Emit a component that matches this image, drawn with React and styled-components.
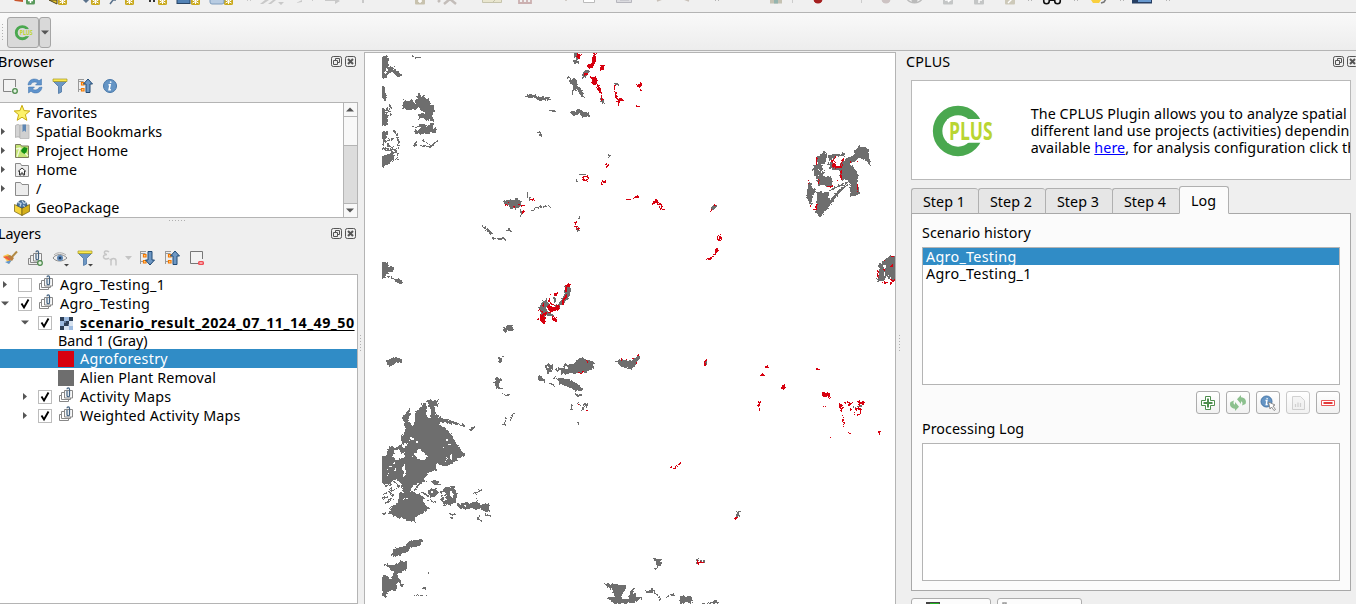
import React from "react";
import styled, { createGlobalStyle } from "styled-components";

const Global = createGlobalStyle`
  * { box-sizing: border-box; }
  html, body { margin: 0; height: 604px; overflow: hidden; background: #efefef; }
  body { font: 14.3px/19px "Noto Sans", "Open Sans", sans-serif; color: #000; letter-spacing: -0.1px; }
  svg { display: block; flex: none; }
`;

const Window = styled.div`
  width: 1356px;
  height: 604px;
  overflow: hidden;
  display: flex;
  flex-direction: column;
`;
const TopToolbar = styled.div`
  height: 13px;
  flex: none;
  overflow: hidden;
  background: #f0f0f0;
  border-bottom: 1px solid #b4b4b4;
`;
const PluginToolbar = styled.div`
  height: 38px;
  flex: none;
  display: flex;
  align-items: flex-start;
  padding: 4px 0 0 2px;
  gap: 4px;
  background: linear-gradient(#f9f9f9, #ededed);
  border-bottom: 1px solid #b4b4b4;
`;
const Grip = styled.div`
  width: 1px;
  padding-top: 7px;
`;
const SplitButton = styled.div`
  display: flex;
  height: 31px;
`;
const SplitPart = styled.div`
  width: ${(p) => p.$w}px;
  border: 1px solid #a5a5a5;
  border-radius: 3px;
  background: #d9d9d9;
  display: flex;
  align-items: center;
  justify-content: center;
`;
const Main = styled.div`
  flex: 1;
  min-height: 0;
  display: flex;
`;
const LeftDock = styled.div`
  width: 358px;
  flex: none;
  display: flex;
  flex-direction: column;
`;
const DockTitle = styled.div`
  height: 22px;
  flex: none;
  display: flex;
  align-items: center;
  padding-left: ${(p) => p.$left || 0}px;
`;
const DockName = styled.span`
  flex: 1;
  margin-left: ${(p) => p.$shift || 0}px;
  padding-bottom: 2px;
  letter-spacing: ${(p) => p.$ls || "-0.1px"};
`;
const DockButtons = styled.div`
  display: flex;
  gap: 2px;
  margin-right: ${(p) => p.$right || 0}px;
`;
const IconBar = styled.div`
  height: 29px;
  flex: none;
  display: flex;
  align-items: center;
  gap: 9px;
  padding: 0 0 4px 2px;
`;
const Tree = styled.div`
  height: ${(p) => p.$h};
  flex: ${(p) => (p.$grow ? 1 : "none")};
  min-height: 0;
  display: flex;
  overflow: hidden;
  background: #fff;
  border: 1px solid #b4b4b4;
  border-left: 0;
`;
const TreeRows = styled.div`
  flex: 1;
`;
const TreeRow = styled.div`
  height: ${(p) => p.$h || 19}px;
  display: flex;
  align-items: center;
  padding-left: ${(p) => p.$indent || 0}px;
  white-space: nowrap;
  background: ${(p) => (p.$selected ? "#308cc6" : "transparent")};
  color: ${(p) => (p.$selected ? "#fff" : "#000")};
`;
const ArrowCell = styled.span`
  width: ${(p) => p.$w}px;
  padding-left: ${(p) => p.$x || 0}px;
  flex: none;
`;
const Label = styled.span`
  margin-left: ${(p) => (p.$gap === undefined ? 6 : p.$gap)}px;
  letter-spacing: ${(p) => p.$ls || "0.22px"};
  font-weight: ${(p) => (p.$active ? 700 : 400)};
  ${(p) => p.$active && "text-decoration: underline; text-underline-offset: 2px;"}
`;
const CheckBox = styled.span`
  width: 14px;
  height: 14px;
  flex: none;
  border: 1px solid #bcbcbc;
  background: #fff;
`;
const LayerIcon = styled.span`
  margin-left: 6px;
  padding-bottom: ${(p) => (p.$group ? 3 : 0)}px;
`;
const Swatch = styled.span`
  width: 16px;
  height: 16px;
  flex: none;
  background: ${(p) => p.$color};
`;
const ScrollBar = styled.div`
  width: 14px;
  flex: none;
  display: flex;
  flex-direction: column;
  border-left: 1px solid #b4b4b4;
  background: #dcdcdc;
`;
const ScrollPart = styled.div`
  height: ${(p) => p.$h}px;
  display: flex;
  align-items: center;
  justify-content: center;
  background: #f8f8f8;
  border-bottom: ${(p) => (p.$end ? 0 : 1)}px solid #b4b4b4;
  border-top: ${(p) => (p.$end ? 1 : 0)}px solid #b4b4b4;
  margin-top: ${(p) => (p.$end ? "auto" : 0)};
`;
const HandleRow = styled.div`
  height: 5px;
  flex: none;
  padding: 2px 0 0 169px;
`;
const Splitter = styled.div`
  width: ${(p) => p.$w}px;
  flex: none;
  display: flex;
  align-items: flex-start;
  justify-content: center;
  padding-top: ${(p) => p.$top}px;
`;
const MapFrame = styled.div`
  width: 532px;
  flex: none;
  margin-top: 1px;
  background: #fff;
  border: 1px solid #b4b4b4;
  border-bottom: 0;
  overflow: hidden;
`;
const RightDock = styled.div`
  width: 452px;
  flex: none;
  display: flex;
  flex-direction: column;
`;
const Intro = styled.div`
  width: 440px;
  height: 100px;
  flex: none;
  margin: 7px 0 0 7px;
  display: flex;
  align-items: center;
  background: #fff;
  border: 1px solid #b9b9b9;
  overflow: hidden;
  padding-left: 18px;
`;
const IntroText = styled.div`
  margin-left: 38px;
  padding-top: 1px;
  white-space: nowrap;
  line-height: 17px;
`;
const IntroLine = styled.div`
  letter-spacing: ${(p) => p.$ls};
`;
const HelpLink = styled.span`
  color: #0000ff;
  text-decoration: underline;
`;
const TabBar = styled.div`
  height: 28px;
  flex: none;
  margin: 6px 0 -1px 7px;
  display: flex;
  align-items: flex-end;
`;
const Tab = styled.div`
  width: ${(p) => (p.$active ? 50 : 67)}px;
  height: ${(p) => (p.$active ? 28 : 26)}px;
  padding: ${(p) => (p.$active ? "4px 1px 0 0" : "3px 2px 0 0")};
  text-align: center;
  border: 1px solid #b0b0b0;
  border-right-width: ${(p) => (p.$active ? 1 : 0)}px;
  border-bottom-color: ${(p) => (p.$active ? "#fbfbfb" : "#a8a8a8")};
  border-radius: 3px 3px 0 0;
  background: ${(p) => (p.$active ? "#fbfbfb" : "#e6e6e6")};
  position: relative;
  letter-spacing: 0.05px;
`;
const TabPane = styled.div`
  width: 440px;
  height: 378px;
  flex: none;
  margin-left: 7px;
  padding: 9px 10px 10px;
  background: #fbfbfb;
  border: 1px solid #a8a8a8;
  display: flex;
  flex-direction: column;
`;
const PaneLabel = styled.div`
  height: 19px;
  letter-spacing: 0.05px;
`;
const ListBox = styled.div`
  height: 138px;
  margin-top: 5px;
  flex: none;
  background: #fff;
  border: 1px solid #b4b4b4;
`;
const ListItem = styled.div`
  height: 17px;
  line-height: 18px;
  padding-left: 3px;
  letter-spacing: 0.3px;
  background: ${(p) => (p.$selected ? "#308cc6" : "transparent")};
  color: ${(p) => (p.$selected ? "#fff" : "#000")};
`;
const ActionRow = styled.div`
  display: flex;
  justify-content: flex-end;
  gap: 6px;
  padding: 6px 0;
  height: 34px;
`;
const ActionButton = styled.div`
  width: 24px;
  height: 23px;
  display: flex;
  align-items: center;
  justify-content: center;
  border: 1px solid ${(p) => (p.$disabled ? "#c9c9c9" : "#adadad")};
  border-radius: 3px;
  background: linear-gradient(#fff, #f1f1f1);
  svg { opacity: ${(p) => (p.$disabled ? 0.5 : 1)}; }
`;
const FooterRow = styled.div`
  display: flex;
  gap: 6px;
  margin: 7px 0 0 7px;
`;
const FooterButton = styled.div`
  width: ${(p) => p.$w}px;
  height: 26px;
  flex: none;
  padding: 3px 0 0 ${(p) => p.$pad}px;
  border: 1px solid #adadad;
  border-radius: 3px;
  background: #fcfcfc;
`;

const DockIcon = ({ kind }) => (
  <svg width="12" height="12" viewBox="0 0 12 12" fill="none" stroke="#555">
    <rect x=".5" y=".5" width="10" height="10" rx="1.8" strokeWidth="1" />
    {kind === "close" ? (
      <path d="M3 3l5 5M8 3l-5 5" strokeWidth="2" />
    ) : (
      <path d="M4.500 4.500v-2h4v4h-2M2.500 4.500h4v4h-4z" strokeWidth="1" />
    )}
  </svg>
);
const Arrow = ({ dir }) => (
  <svg width="9" height="9" viewBox="0 0 9 9" fill="#555">
    <path d={{ right: "M1 1v7l4-3.500z", down: "M0 2.500h8l-4 4z", up: "M0 6.500h8l-4-4z" }[dir]} />
  </svg>
);
const Dots = ({ vertical, n = 6 }) => (
  <svg width={vertical ? 2 : 18} height={vertical ? 18 : 2} fill="#b0b0b0">
    {Array.from({ length: n }, (_, i) => (
      <rect key={i} x={vertical ? 0 : i * 3} y={vertical ? i * 3 : 0} width="1" height="1" />
    ))}
  </svg>
);
const Check = () => (
  <svg width="12" height="12" viewBox="0 0 12 12" fill="none" stroke="#000" strokeWidth="1.900">
    <path d="M2.500 5.500l2.500 4 4.500-8" />
  </svg>
);

const funnel = (
  <g>
    <path d="M1.500 3.500l5 5v7l3-1.500v-5.500l5-5z" fill="#6d97c4" stroke="#4a74a3" strokeWidth=".8" />
    <path d="M1 1h14v2.500H1z" fill="#fce94f" stroke="#a59a23" strokeWidth=".7" />
  </g>
);
const tree = (
  <g fill="none">
    <path d="M1.500 1v13M1.500 3.500h5M1.500 11.500h4M1 1.500h6" stroke="#999" />
    <path d="M4.500 4.500h2.500v2.500H4.500zM4.500 10.500h2.500v2.500H4.500z" stroke="#f57900" fill="#ffd090" strokeWidth="1.200" />
  </g>
);
const upArrow = <path d="M11 1l4.500 5H13v8.500H9V6H6.500z" fill="#6d97c4" stroke="#204a75" />;
const groupShape = (
  <g fill="none">
    <path d="M4 8.500H1.500v6h9V13" stroke="#888" />
    <path d="M6 5.500H3.500v7h9V11" stroke="#888" />
    <path d="M6.500 3.500h8v7.500H6.500z" stroke="#888" fill="#f7f7f7" />
    <path d="M9 4v4.500a1 1 0 002.500 0V2.200a1.200 1.200 0 00-2.500 0" stroke="#41607f" strokeWidth="1.200" />
  </g>
);
const infoShape = (
  <g>
    <circle cx="8" cy="8" r="6.500" fill="#6595c5" stroke="#4676a8" />
    <path d="M8.800 3.500l-.3 1.400M6.500 6.800h1.600l-1 5h1.800" stroke="#fff" strokeWidth="1.600" fill="none" />
  </g>
);

const shapes = {
  add: (
    <g fill="none">
      <path d="M13.500 9V1.500h-12v12h8" stroke="#858585" fill="#f2f2f2" />
      <circle cx="13" cy="13" r="2.300" stroke="#4b8a4b" strokeWidth="1.300" fill="#e5f2e2" />
    </g>
  ),
  refresh: (
    <g fill="#5f93cc" stroke="#3a6fa8" strokeWidth=".5">
      <path d="M1 7c.5-4 3-6 6.500-6 2 0 3.500.8 4.500 1.800L14.500 1v6H8.500l2-2C9 3.500 5 3.600 4 6.500z" />
      <path d="M15 9c-.5 4-3 6-6.500 6-2 0-3.500-.8-4.500-1.800L1.500 15V9h6l-2 2c1.500 1.500 5.500 1.400 6.500-1.500z" />
    </g>
  ),
  filter: funnel,
  filterMenu: (
    <g>
      {funnel}
      <path d="M11 14h5l-2.500 2.500z" fill="#444" />
    </g>
  ),
  collapse: (
    <g>
      {tree}
      {upArrow}
    </g>
  ),
  expand: (
    <g>
      {tree}
      <path d="M11 15l4.500-5H13V1.500H9V10H6.500z" fill="#6d97c4" stroke="#204a75" />
    </g>
  ),
  info: infoShape,
  star: <path d="M8 .3l2.100 5.300 5.700.4-4.400 3.700 1.400 5.600L8 12.200 3.200 15.300l1.400-5.600L.2 6l5.700-.4z" fill="#fcf26a" stroke="#c9ab0c" />,
  bookmark: (
    <g>
      <path d="M1.500 1.500c2-1.500 3.500-1 4.500 0v12c-1-.8-3-.8-4.500 0z" fill="#d4d4d4" stroke="#aaa" strokeWidth=".8" />
      <path d="M6 1h9v13.500H6z" fill="#d0d0d0" stroke="#b5b5b5" strokeWidth=".8" />
      <path d="M8.500 .5h3.500v7.500l-1.700-1.500L8.500 8z" fill="#5e87b4" />
    </g>
  ),
  projectHome: (
    <g>
      <path d="M1.500 1.500h5l1 1.500h7v11.500h-13z" fill="#c4e476" stroke="#7a7a5a" />
      <path d="M2 6l4-1 8 8M6 5l-3 9" stroke="#f2f9dc" strokeWidth="1.300" fill="none" />
      <path d="M7 7l3-3 3.500 1-1 4-2 2-3-2z" fill="#139014" />
    </g>
  ),
  home: (
    <g fill="#ececec" stroke="#8a8a8a">
      <path d="M1.500 1.500h5l1 2h7v11h-13z" />
      <path d="M4 9.500l4-3.500 4 3.500M5.500 9v4h1.500v-2h2v2h1.500V9" stroke="#333" fill="#fff" />
    </g>
  ),
  folder: <path d="M1.500 1.500h5l1.500 2h6.500v11h-13z" fill="#ececec" stroke="#8a8a8a" />,
  geopackage: (
    <g>
      <path d="M.5 4.500l7.500 3.500v7.500l-7.500-4z" fill="#f5d53c" stroke="#6d5a10" strokeWidth=".7" />
      <path d="M15.500 4.500L8 8v7.500l7.500-4z" fill="#d5b01b" stroke="#6d5a10" strokeWidth=".7" />
      <path d="M3 5.500a5 5 0 1110 0L8 8z" fill="#4b74a0" stroke="#29465f" strokeWidth=".7" />
      <path d="M4 2.500l3 1-1 3M8 .5l2 3 2-1M9 5.500l2 1" stroke="#c3d7e8" strokeWidth="1.200" fill="none" />
    </g>
  ),
  style: (
    <g>
      <path d="M15 1.500L9 8" stroke="#b28a45" strokeWidth="2" />
      <path d="M1 6l5-2 5 4-4 6z" fill="#f6c84d" />
      <path d="M1 7l4-1 4 3-1 2z" fill="#ef5d3c" />
      <path d="M3 12l4 2 3-4z" fill="#6197cf" />
      <path d="M8 5l4 3-2 3-5-5z" fill="#b9803f" />
    </g>
  ),
  group: groupShape,
  addGroup: (
    <g>
      {groupShape}
      <circle cx="13" cy="13" r="2.300" stroke="#4b8a4b" strokeWidth="1.200" fill="#e5f2e2" />
    </g>
  ),
  eye: (
    <g fill="none">
      <path d="M1 8c3-4.500 10-4.500 14 0-4 4-11 4-14 0z" fill="#eee" stroke="#888" />
      <path d="M2 5c3-3 8-3 12 0" stroke="#aaa" />
      <circle cx="8" cy="8" r="3" fill="#5f88b6" />
      <circle cx="8" cy="8" r="1.300" fill="#223e60" />
      <path d="M12 14h5l-2.500 2.500z" fill="#444" />
    </g>
  ),
  expression: (
    <g fill="none" stroke="#c6c6c6" strokeWidth="1.500">
      <path d="M7 2C4.500 0 2 1.200 2.500 3c.3 1.300 1.500 1.500 2.500 1.500C3 4.500 1.200 5.500 1.500 7.200 2 9.500 5 9.500 7 8.200" />
      <path d="M9 15.500V11a2.500 2.500 0 015 0v4.500M7.500 9.500H10" />
    </g>
  ),
  remove: (
    <g>
      <path d="M13.500 9V1.500h-12v12h8" stroke="#777" fill="#f2f2f2" />
      <rect x="9" y="11" width="6" height="4" rx="1.500" fill="#ef4b53" />
      <path d="M10.500 13h3" stroke="#fff" />
    </g>
  ),
  raster: (
    <g shapeRendering="crispEdges">
      <path d="M2 2h13v13H2z" fill="#d6e2f0" />
      <path d="M2 2h4v4H2zM6 6h5v5H6zM11 2h4v4h-4zM2 11h4v4H2z" fill="#2c3e55" />
      <path d="M6 2h5v4H6zM2 6h4v5H2zM11 11h4v4h-4z" fill="#9dbbe0" />
      <path d="M6 6h2v2H6zM10 9h1v2h-1z" fill="#60799a" />
    </g>
  ),
  plus: (
    <g fill="none" stroke="#4d8d4d">
      <path d="M5.500 1.500h5v4h4v5h-4v4h-5v-4h-4v-5h4z" fill="#fff" />
      <path d="M8 3.500v9M3.500 8h9" strokeWidth="2" />
    </g>
  ),
  sync: (
    <g fill="#8cc08e">
      <path d="M7 4.300l4-4.300v2.300c4 .2 6 3.500 4.500 6.700l-3.500 1.500c1.200-2.500 0-4-1-4V9z" />
      <path d="M9 11.700l-4 4.300v-2.300C1 13.500-1 10.200.5 7L4 5.500C2.800 8 4 9.500 5 9.500V7z" />
    </g>
  ),
  infoPick: (
    <g>
      <circle cx="6.500" cy="6.500" r="5.500" fill="#6595c5" stroke="#4676a8" />
      <path d="M7.300 3l-.3 1.200M5.500 5.500H7l-.8 4h1.500" stroke="#fff" strokeWidth="1.300" fill="none" />
      <path d="M8.500 7l6.500 3-2 1 2.500 3.500-1.500 1L11.500 12 10 14z" fill="#fff" stroke="#777" strokeWidth=".8" />
    </g>
  ),
  report: (
    <g fill="none" stroke="#aaa">
      <path d="M2.500 1.500h8l4 4v9h-12z" fill="#eee" />
      <path d="M5.500 12V9M8 12V7.500M10.500 12V8" strokeWidth="1.200" />
    </g>
  ),
  minus: (
    <g>
      <path d="M1.500 5.500h13v5h-13z" fill="#fff" stroke="#e85757" />
      <path d="M3.500 8h9" stroke="#e23b3b" strokeWidth="2" />
    </g>
  ),
};
const Icon = ({ name, size = 16 }) => (
  <svg width={size} height={size} viewBox="0 0 16 16" overflow="visible">
    {shapes[name]}
  </svg>
);

const LogoType = styled.text`
  font: 700 26px "Open Sans", sans-serif;
  letter-spacing: 0;
`;
const CplusLogo = ({ size, backdrop }) => (
  <svg width={size * 1.1} height={size} viewBox="0 0 66 60" overflow="visible">
    <circle cx="29.500" cy="30.500" r="21.500" fill="none" stroke="#4aa84f" strokeWidth="10" />
    <path d="M18 18h38v25H18z" fill={backdrop} />
    <LogoType x="20" y="40" fill="#b9d532" textLength="46" lengthAdjust="spacingAndGlyphs">
      PLUS
    </LogoType>
  </svg>
);

/* Lower edges of the main toolbar's icons, cut off by the window top. */
const ToolbarStrip = () => (
  <svg width="1356" height="12" viewBox="0 0 1356 12">
    <path d="M14 0h9v2l-8-1z" fill="#c9552c" />
    <rect x="26" y="-5" width="9" height="9.500" rx="1.500" fill="#5a9a5d" />
    <path d="M30.500 0v3M28 .5h5" stroke="#fff" strokeWidth="1.500" />
    <path d="M49 0h8v4z" fill="#e5c229" stroke="#4c4320" />
    {[58, 91, 125, 158, 191, 224].map((x) => (
      <g key={x}>
        <rect x={x} y="-4" width="9" height="9" rx="1.500" fill="#c9a91d" />
        <path d="M4.500-1v5M1.500 0l6 3M7.500 0l-6 3" transform={`translate(${x} 0)`} stroke="#fff" />
      </g>
    ))}
    <path d="M84 0h4l-2 2zM110 4l3-4h3" fill="none" stroke="#59718b" strokeWidth="1.500" />
    <path d="M149 1h2M153 1h2" stroke="#333" strokeWidth="2" />
    <rect x="177" y="-5" width="13" height="8.500" fill="#5282b5" stroke="#294565" />
    <rect x="210" y="-5" width="14" height="9" rx="2" fill="#b8cce2" stroke="#7e9cbc" />
    <g fill="#c9c9c9">
      <path d="M260 4l5-4h4l-6 4zM268 4l5-4h3l-5 4zM278 2h6l-3 3zM296 3l6-3v2zM325 0h10v1h-10zM335-2l5 3-5 3zM362 0h2v3h-2z" />
      <path d="M247 0h1v1h-1zM250 0h1v1h-1zM312 0h1v1h-1z" />
    </g>
    <rect x="415" y="-5" width="10" height="9.500" rx="1" fill="#c8c2ae" />
    <path d="M418 1h4M420-1v4" stroke="#fff" strokeWidth="1.400" />
    <path d="M438 2l2-2M444 4l6-5 6 5" stroke="#c3bdb9" strokeWidth="2.500" fill="none" />
    <path d="M482.500 0v2.500h19V0M492 3l3-3" stroke="#c6c4ad" fill="#e9e6cf" />
    <path d="M519 0v3h12V0M523 0v2M527 0v2" stroke="#cbb0b0" strokeWidth="1.800" fill="none" />
    <path d="M583.500 0v2.500h11V0" stroke="#bbb" fill="#fff" />
    <path d="M616.500 0v2.500h15V0M620 0h9" stroke="#b6b6bd" fill="#dcdce0" />
    <path d="M657 1l5-2M684-1l5 2M565 0h2" stroke="#c8c0b8" strokeWidth="1.700" />
    <g fill="#b4b4b4">
      {[715, 1028, 1074, 1120, 1166].map((x) => (
        <path key={x} d={`M${x} 0h1v1h-1zM${x + 3} 0h1v1h-1z`} />
      ))}
    </g>
    <path d="M770 0h12v3.500h-12z" fill="#c5c2b3" />
    <path d="M774 0h4v3.500h-4z" fill="#95b4ae" />
    <path d="M792.500 0v3M861.500 0v3" stroke="#ccc" />
    <circle cx="818" cy="-1" r="4.500" fill="#a52020" />
    <circle cx="886" cy="-1" r="4.500" fill="#cdc3c3" />
    <path d="M907-1c3 5 12 5 15 0" stroke="#bbb" strokeWidth="1.400" fill="none" />
    <circle cx="914.500" cy="0" r="3" fill="#bbb" />
    <rect x="943" y="-5" width="10" height="9.500" rx="1" fill="#c4c6c6" />
    <rect x="974" y="-5" width="10" height="9.500" rx="1" fill="#c4c6c6" />
    <rect x="1005" y="-5" width="10" height="9.500" rx="1" fill="#cdc9b9" />
    <path d="M945 0h5l-2-2M950 0l-2 2M979 3V0h3M1008 3l4-4" stroke="#fff" strokeWidth="1.400" fill="none" />
    <circle cx="1046.500" cy="1" r="2.800" fill="#eee" stroke="#111" strokeWidth="1.600" />
    <circle cx="1057.500" cy="1" r="2.800" fill="#eee" stroke="#111" strokeWidth="1.600" />
    <path d="M1049 0h6" stroke="#111" strokeWidth="2" />
    <path d="M1091 0h10l-2 3h-6z" fill="#f9cf3e" />
    <path d="M1101 3l3-1 2-3" stroke="#777" strokeWidth="1.500" fill="none" />
    <path d="M1132 0h20v3.500h-20z" fill="#273f63" />
    <path d="M1138 0h13v2h-13z" fill="#6899cf" />
  </svg>
);

const grey = "#6e6e6e";
const red = "#d7000f";

/* Classified raster: grey is plant removal, red is agroforestry. Each tile is digitised at a third of a pixel. */
const tiles = [
  {
    at: [375, 50],
    greyFill:
      "M15 19h25v32h22v4h-8l28 20v6h-12l-18-14-10 2-8 18h-19zM15 108h13l6 46h-5l-7-10h-7zM15 172l15 4 2 14 6 6v28h-23zM15 240l19 4 6-4-2 10-10 16-13 4zM15 320l19-6 24-8-2 24-12 12-29 12z" +
      "M84 152l24-4 12 14 8-28 6-2 30 18v14l14 4v24l-18 0-16-8-12-12-14 8h-22l-12-4zM132 190h42v24l-10-8-10 8-8-12-14 4zM132 218l16 2 10 8 16-10v16h8v14h-18v4h-44v-10l14-6z" +
      "M112 288l12-16 4 14zM325 529l14 6 8 8 8 10h-12l-8-12zM15 636h23l4 16h14v8l-10 6-10 4-8 14h-13zM70 684l14 12-4 6-14-4-8-8z" +
      "M379 459l14-10h26l10-2 10 8-2 14-8 6-20 2-10-12z",
    greyLine:
      "M111 16l9 8h18M42 162l6 10-6 10 10 12M26 184l12-10v14M56 240l8 16 8 22-6 18-28 6-14-14 2-20 10-8M30 296l28 12 12-10M70 308l-6 28M30 256l-4 20 18-6 14-4M36 282l18 14M20 296l18 4M112 229h24M124 286l46 4 6-6M142 272l18 8 8 8 20-16M349 563l22 4h20M397 539l14 6M40 678l30 14M436 476l4 22",
    redLine: "M390 464h6M400 454v6M414 466l6 6M428 464h6M438 468h8M442 486h4",
    holes: "M30 58h10v3h-10zM28 66h8v3h-8z",
  },
  {
    at: [500, 50],
    greyFill:
      "M220 9h14v22l6 12h-18l2-16zM246 74l8-14 16 4-10 16-8 6zM208 92l16-8 8 18 20 30 2 12-8-4-16-22-8 4-4 14-4-4 6-20zM76 136l18-4 20 8 36 2 2 8-32 2-16-6-24-4zM213 182h16l6-10 6 8 20 8 16 14h-26l-14-10-16 8-8-10zM115 246l8-4v8l8 12-14-8zM306 140l6 18-6 4-6-20zM635 464h12v6l-6 10-6-2z" +
      "M196 704l18-2-4 30-12 22-12 10-18 14-6-4 18-18 10-16zM160 742l8 2-2 12-6-4zM126 756l14-8 6 16-8 12 10 14 16 6-14 4-10-4-14 14-8-4 6-16-8-14z" +
      "M12 830l26-6v18H12z",
    greyLine: "M198 78l14 8 4 10M150 182h16l-6 4M324 314l6 4-6 4M346 108v-6h10v6M238 374h18M230 388l4 10M84 424l-4 10 10 14M94 482l16-8 24-6h16M24 538l10 6M228 530l6 14 6-4M238 498v10M232 530l4 14M166 738l-6 10 4 10",
    redFill:
      "M280 9h8v22l-8 22h-16l-4-8 14-4zM300 46h12v14h-12zM272 80h16l4 16-8 12-8-10zM288 108l14 8 4 16-8-4zM350 142l14 6-8 20-6-8zM411 104l8-4 4-6 4 14-8 4 4 10-12-14zM234 11h14l-14 18-6-8zM318 342h8v8h-8z" +
      "M200 702h14v8h-12l-4 24 4 4-8 12v-30zM140 770l8-8 10 8h12l10 6-16 8-16 2zM120 796h12v14l-10 2zM154 800l16 4v8h-10zM144 742l6 4v14l-6-4z",
    redLine:
      "M252 72h12M280 80l16 28 12 48M342 108l4 28 12 18-4 14M360 146l8 4M408 169h12M248 382l14-4v12h-12M306 404v-12l12 6M378 446l10 4M402 444l16-4M456 468l14-18 4 14h12l-4 14h12M462 458l16-2M476 470l12 10M630 486l6-8M642 466l4-4M652 556v16l12-6-8-4M662 552l-2 20M622 628h10l12-16 12-14-10 4M90 448l18 4M230 510l-4 16 10 14M154 734l16-2M146 744l6 18 26 10M196 742l-10 18M108 812l14-8M118 778l10 8M132 760l-4 8M140 790l-14 6M132 800v18",
  },
  {
    at: [375, 320],
    greyFill:
      "M385 26l14-12h14v12l-14 8-14 2zM33 122l28-12 20 8v6l-26 10-8 8-12-6zM358 186l8-16 16 8-2 8-8 4v10l18 8h-26zM370 110h16l-8 12-6 14zM510 140l10-10 16 8-6 18-14 2zM540 148l22-6 8-12 22 2 20-12 8-10 12 8 22 6 4 20-14 8-16 8-22-2-20 2-28 4zM545 176l20-4 24 8 28 18 4 14h-20l-28-14-20-4zM596 220l26 2-12 10zM492 168l12 4v10h-12z" +
      "M724 124l10-7 34 5 26-18 0 8-14 28-8 8-38-8zM282 326l18-8-2 10-12 6z" +
      "M82 292L104 266L108 284L100 298L106 312L118 318L120 276L136 262L144 246L156 258L152 280L158 292L168 300L168 272L160 250L154 240L188 240L190 258L178 258L184 280L190 290L230 302L272 316L272 320L200 306L186 316L208 320L234 350L246 374L272 402L250 418L218 438L184 432L182 450L160 460L140 486L114 498L100 516L84 516L80 490L60 478L46 490L15 490L15 410L34 406L42 378L62 384L80 372L78 350L92 330Z" +
      "M74 520l34-6 14 4 24 10v20l16 18-18 14-22 12-2 14-22-4-8-6-26-4-22-14 6-18 20-10z" +
      "M196 514l16-12 28-4 6 32-4 18-36 8-6-14zM158 512l24-6 10 12-16 16-18-8zM246 552l60-6 14 8 22-4 2 26-14-2-12-8-24 2-44-4zM166 484l18-4 12 14-18 2z" +
      "M44 708l14-22 30-8 20-18 34-2-4 20-32 6-10 10-30 16zM26 732l30 4 22-14h20l-4 28-24 12 4 26-12 4 2 22-16-4-18 14h-10v-58h11l4 0 14 12 8-24z" +
      "M688 790l50 4 16 6-4 14-12 14 4 10 20-6 4-20 10-8 4 24 20 6-20 12-28 6h-34l-10-10-14-6 8-6 20 2-12-26-14-6z",
    greyLine:
      "M382 218l10 8 12-2M392 290v14l-8 8 10 4M404 302l14-24M592 256l-4 8 6 8M610 246l6 12M624 252h14v10l-12-4M624 262v12M608 304l4 8M30 500l24-18 22 20M26 522l36-14M28 552l26-20M24 490l10 12M22 536l18-6M48 492l-6 24 14 10M90 512l14 8 20-14M120 506l22-24 18 4M140 516l22 14M222 552l6 6M292 520l16-2 12-10M304 522v30M312 586v12l6 8M328 576l8 10h14M22 582h10M160 540l24 8M220 580l16 4-6 10M160 758l6 4M62 760l18 34 2 8M142 806l10-4M118 826h38M22 828h14M814 816h20M836 716h4M508 178l4 16M520 186l20 14M532 170l16 8M598 198l20 10",
    redLine: "M484 1h12l10 4v-4M538 2h8M738 122v-4M752 118h4M770 116h6M782 128h4M786 106h8M610 158h16M636 126h4M610 256h4M634 268h4",
    holes:
      "M58 390l14-2 4 10 14 0-6 16-18 6-14-10zM76 376l14-8 8 8-12 10zM124 396l10-14 8 14 16 6-8 18-20-2-10-10-8 2zM88 428l-6 20 4 10 0 16 6-16zM46 438h4v4h-4zM60 448h4v4h-4zM38 460h4v4h-4zM34 446h4v4h-4zM58 426h4v4h-4zM214 414h6v4h-6zM226 402h4v18h-4zM214 356h4v6h-4zM222 372h4v4h-4zM204 380h4v4h-4zM104 354h12v6h-12zM124 364h6v4h-6zM86 534h14v4h-14zM206 514l8 20-4 10-6-14zM224 512l10 10v12l-8-6zM570 142h8v5h-8zM516 140h5v8h-5zM552 154h6v4h-6zM168 514h6v5h-6zM264 556h8v4h-8zM210 418l3 8h-3zM66 346h5v4h-5z",
  },
  {
    at: [640, 330],
    greyFill: "M199 92h3v14h-3zM290 548l8-2v16h-12zM42 686h20v10l6 2-6 8-18 14 8-14zM168 688l8-6 2 10 14 4v6h-24zM18 780l20-2 12 4-14 8-18-2zM88 794l14-4v10zM120 798h36v24h-8l-4-12-10 12h-14zM182 818l20 2 30-10 4 12h-54z",
    greyLine: "M288 544h12M190 684l4 14M44 786l12 12 4 12M78 802l12-6M0 804h6M652 229h14M640 231h8",
    redFill: "M172 688l8 8 14 2v4h-22zM422 168l12-6 4 14h-16zM546 190h20v6l-8 4h-12zM652 214h20v10h-18zM596 220h10v14h-10zM624 216h10v12h-10zM192 94h6v14h-6z",
    redLine:
      "M194 104l4-16M376 104l10 12M360 136l10-4M528 116l10 4M568 190v16M548 230h12M360 216l-4 12 4 16M94 412h12l16-14M104 416l2-6M284 564h10M610 218h28M606 234l-4 12M604 256h4M608 264l4 16h8M608 290h8M630 234l6 8M644 236l20 2-4 16h-18l2-8M626 308h8l-4 4M570 320l2 8M718 304v6l2 8M96 790h4M196 820h6",
  },
  {
    at: [790, 130],
    greyFill:
      "M80 82l22-20 10 12-4 20-12 16 8 14-10 18 18-4-2 26-24 4-6-20-8-14-2-20 14-12zM112 76l34-4 20-4-2 14-14-6-16 8-16 8zM170 84l22-6v-18l18-12 22 6 10 50-18-16-20-2-12 10-12 4 22 26 2 24 4 46-28 2-2-46-14-4-10 4-6-16 8-30-6-6z" +
      "M94 142l30-4 2 26-16 6-18-10zM112 100l14-4 6 14 24 2-4 10-30-4z" +
      "M56 150l8 18 14 14-10 14-2 32-8-8-8-20zM82 186h34l4 28 8-14 28-30 18-10v6l-18 14-30 38-18 24-16 20-16-18z" +
      "M268 400l36-22h16v68l-18 6-6-6-4-10-10 18h-22l8-26z",
    greyLine: "M72 110l24 30M74 130l30 10M116 182l28-12 28-14M236 100l6 8M120 116l6-4",
    redFill: "M126 104l6-8 8 6-2 10h-10zM304 448l10-2v6l-10 4z",
    redLine:
      "M79 80v24M158 84l-4 26-20 2M126 94l12-14M112 168h16M154 120v30M142 150l6 4M86 148v16M56 150v14M60 226v4M84 220l-10 20M202 160v26M180 94h8M166 176v4M202 96v6M282 392h6M304 380h8M308 402l-6 10M262 424v20M280 420h8M276 458h18M302 462l8-12",
    holes: "M84 118h3v4h-3zM96 120h4v5h-4zM84 134h5v3h-5zM94 102h4v4h-4zM86 106h3v3h-3zM284 400l4 8-4 30h-3zM300 410l2 40h-3z",
  },
];

const RasterMap = () => (
  <svg width="530" height="551" viewBox="365 53 530 551" shapeRendering="crispEdges">
    <defs>
      <filter id="ragged" x="365" y="53" width="530" height="551" filterUnits="userSpaceOnUse" colorInterpolationFilters="sRGB">
        <feTurbulence type="fractalNoise" baseFrequency="0.4" numOctaves="2" seed="4" result="n" />
        <feDisplacementMap in="SourceGraphic" in2="n" scale="4" xChannelSelector="R" yChannelSelector="G" />
      </filter>
    </defs>
    <g filter="url(#ragged)">
      {tiles.map((t) => (
        <g key={t.at.join()} transform={`translate(${t.at[0]} ${t.at[1]}) scale(.33333)`} fill="none" strokeWidth="4">
          <path d={t.greyFill} fill={grey} />
          <path d={t.greyLine} stroke={grey} />
          {t.holes && <path d={t.holes} fill="#fff" />}
          {t.redFill && <path d={t.redFill} fill={red} />}
          <path d={t.redLine} stroke={red} />
        </g>
      ))}
    </g>
    <rect x="365" y="53" width="17" height="551" fill="#fff" />
  </svg>
);

const browserRows = [
  ["star", "Favorites", false, "0.02px"],
  ["bookmark", "Spatial Bookmarks", true, "0.08px"],
  ["projectHome", "Project Home", true, "0.1px"],
  ["home", "Home", true, "0.1px"],
  ["folder", "/", true, "0"],
  ["geopackage", "GeoPackage", false, "0.02px"],
];

const Title = ({ name, shift, left, right, ls }) => (
  <DockTitle $left={left}>
    <DockName $shift={shift} $ls={ls}>{name}</DockName>
    <DockButtons $right={right}>
      <DockIcon kind="float" />
      <DockIcon kind="close" />
    </DockButtons>
  </DockTitle>
);

const LayerRow = ({ indent = 0, dir, checked, icon, children, active, ls }) => (
  <TreeRow $indent={indent}>
    <ArrowCell $w={18} $x={dir === "down" ? 1 : 2}>
      <Arrow dir={dir} />
    </ArrowCell>
    <CheckBox>{checked && <Check />}</CheckBox>
    <LayerIcon $group={icon === "group"}>
      <Icon name={icon} />
    </LayerIcon>
    <Label $gap={6} $active={active} $ls={ls}>{children}</Label>
  </TreeRow>
);

export default function App() {
  return (
    <Window>
      <Global />
      <TopToolbar>
        <ToolbarStrip />
      </TopToolbar>
      <PluginToolbar>
        <Grip>
          <Dots vertical />
        </Grip>
        <SplitButton>
          <SplitPart $w={32}>
            <CplusLogo size={17} backdrop="#d9d9d9" />
          </SplitPart>
          <SplitPart $w={12}>
            <Arrow dir="down" />
          </SplitPart>
        </SplitButton>
      </PluginToolbar>
      <Main>
        <LeftDock>
          <Title name="Browser" shift={-2} right={1} ls="0.15px" />
          <IconBar>
            {["add", "refresh", "filter", "collapse", "info"].map((n) => (
              <Icon key={n} name={n} />
            ))}
          </IconBar>
          <Tree $h="116px">
            <TreeRows>
              {browserRows.map(([icon, text, arrow, ls]) => (
                <TreeRow key={text}>
                  <ArrowCell $w={14}>{arrow && <Arrow dir="right" />}</ArrowCell>
                  <Icon name={icon} />
                  <Label $ls={ls}>{text}</Label>
                </TreeRow>
              ))}
            </TreeRows>
            <ScrollBar>
              <ScrollPart $h={14}>
                <Arrow dir="up" />
              </ScrollPart>
              <ScrollPart $h={29} />
              <ScrollPart $h={14} $end>
                <Arrow dir="down" />
              </ScrollPart>
            </ScrollBar>
          </Tree>
          <HandleRow>
            <Dots />
          </HandleRow>
          <Title name="Layers" shift={-2} right={1} />
          <IconBar>
            {["style", "addGroup", "eye", "filterMenu", "expression"].map((n) => (
              <Icon key={n} name={n} />
            ))}
            <svg width="3" height="8" viewBox="0 0 3 8" overflow="visible">
              <path d="M-2 2h7L1.500 6z" fill="#c4c4c4" />
            </svg>
            {["expand", "collapse", "remove"].map((n) => (
              <Icon key={n} name={n} />
            ))}
          </IconBar>
          <Tree $grow>
            <TreeRows>
              <LayerRow dir="right" icon="group" ls="0.27px">Agro_Testing_1</LayerRow>
              <LayerRow dir="down" icon="group" checked ls="0.27px">Agro_Testing</LayerRow>
              <LayerRow indent={20} dir="down" icon="raster" checked active ls="0.48px">
                scenario_result_2024_07_11_14_49_50
              </LayerRow>
              <TreeRow $h={17} $indent={58}>
                <Label $gap={0} $ls="-0.08px">Band 1 (Gray)</Label>
              </TreeRow>
              <TreeRow $selected $indent={58}>
                <Swatch $color={red} />
                <Label $ls="0.27px">Agroforestry</Label>
              </TreeRow>
              <TreeRow $indent={58}>
                <Swatch $color={grey} />
                <Label $ls="0.17px">Alien Plant Removal</Label>
              </TreeRow>
              <LayerRow indent={20} dir="right" icon="group" checked ls="0.2px">Activity Maps</LayerRow>
              <LayerRow indent={20} dir="right" icon="group" checked ls="0.17px">Weighted Activity Maps</LayerRow>
            </TreeRows>
          </Tree>
        </LeftDock>
        <Splitter $w={6} $top={284}>
          <Dots vertical />
        </Splitter>
        <MapFrame>
          <RasterMap />
        </MapFrame>
        <Splitter $w={8} $top={284}>
          <Dots vertical />
        </Splitter>
        <RightDock>
          <Title name="CPLUS" left={2} right={-3} ls="0.2px" />
          <Intro>
            <CplusLogo size={57} backdrop="#fff" />
            <IntroText>
              <IntroLine $ls="0.09px">The CPLUS Plugin allows you to analyze spatial criteria for</IntroLine>
              <IntroLine $ls="0.09px">different land use projects (activities) depending on the</IntroLine>
              <IntroLine $ls="0.07px">
                available <HelpLink>here</HelpLink>, for analysis configuration click the
              </IntroLine>
            </IntroText>
          </Intro>
          <TabBar>
            {["Step 1", "Step 2", "Step 3", "Step 4"].map((t) => (
              <Tab key={t}>{t}</Tab>
            ))}
            <Tab $active>Log</Tab>
          </TabBar>
          <TabPane>
            <PaneLabel>Scenario history</PaneLabel>
            <ListBox>
              <ListItem $selected>Agro_Testing</ListItem>
              <ListItem>Agro_Testing_1</ListItem>
            </ListBox>
            <ActionRow>
              <ActionButton><Icon name="plus" /></ActionButton>
              <ActionButton><Icon name="sync" /></ActionButton>
              <ActionButton><Icon name="infoPick" /></ActionButton>
              <ActionButton $disabled><Icon name="report" /></ActionButton>
              <ActionButton><Icon name="minus" /></ActionButton>
            </ActionRow>
            <PaneLabel>Processing Log</PaneLabel>
            <ListBox />
          </TabPane>
          <FooterRow>
            <FooterButton $w={80} $pad={14}>
              <svg width="16" height="16" viewBox="0 0 16 16">
                <path d="M0 0h14v12H0z" fill="#444" />
                <path d="M4 1h9v10H4z" fill="#21b321" />
              </svg>
            </FooterButton>
            <FooterButton $w={85} $pad={4}>
              <svg width="16" height="16" viewBox="0 0 16 16">
                <path d="M1 4V1h3v3l8 8" fill="none" stroke="#999" strokeWidth="1.500" />
              </svg>
            </FooterButton>
          </FooterRow>
        </RightDock>
      </Main>
    </Window>
  );
}
